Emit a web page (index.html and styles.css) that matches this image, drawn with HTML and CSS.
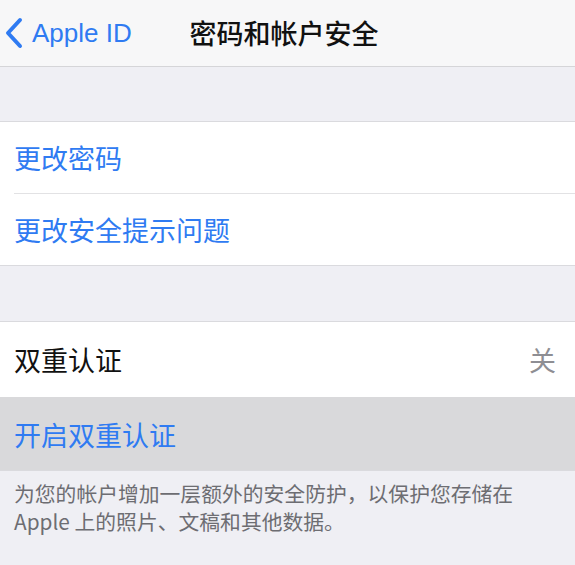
FILE: index.html
```html
<!DOCTYPE html>
<html lang="zh-CN">
<head>
<meta charset="utf-8">
<title>密码和帐户安全</title>
<link rel="stylesheet" href="styles.css">
</head>
<body>
<header class="nav">
  <a class="back" href="#">
    <svg class="chev" width="20" height="32" viewBox="0 0 20 32" aria-hidden="true">
      <path d="M16 3 L4 16 L16 29" fill="none" stroke="currentColor" stroke-width="4" stroke-linecap="round" stroke-linejoin="round"/>
    </svg>
    <span class="back-label">Apple ID</span>
  </a>
  <h1 class="title">密码和帐户安全</h1>
  <span></span>
</header>

<div class="spacer"></div>

<section class="group">
  <div class="row link">更改密码</div>
  <div class="row link">更改安全提示问题</div>
</section>

<div class="spacer spacer-b"></div>

<section class="group">
  <div class="row tall"><span>双重认证</span><span class="value">关</span></div>
  <div class="row link pressed">开启双重认证</div>
</section>

<p class="footer">为您的帐户增加一层额外的安全防护，以保护您存储在<br>Apple 上的照片、文稿和其他数据。</p>
</body>
</html>
```

FILE: styles.css
```css
html, body {
  margin: 0;
  padding: 0;
}

body {
  background: #efeff4;
  font-family: "Noto Sans CJK SC", "Noto Sans", sans-serif;
  color: #111;
}

.nav {
  height: 66px;
  background: #f7f7f8;
  border-bottom: 1px solid #d5d5d8;
  display: grid;
  grid-template-columns: 1fr auto 1fr;
  align-items: center;
}

.back {
  display: flex;
  align-items: center;
  gap: 8px;
  padding-left: 4px;
  color: #2f7bf2;
  text-decoration: none;
}

.chev {
  display: block;
}

.back-label {
  font-family: "Liberation Sans", Arial, sans-serif;
  font-size: 26px;
  line-height: 30px;
  margin-top: -1px;
}

.title {
  margin: 0;
  font-size: 27px;
  font-weight: 500;
  line-height: 32px;
  color: #111;
  padding-right: 7px;
}

.spacer {
  height: 54px;
}

.spacer-b {
  height: 55px;
}

.group {
  background: #fff;
  border-top: 1px solid #dadade;
  border-bottom: 1px solid #dadade;
}

.row {
  height: 71px;
  display: flex;
  align-items: center;
  justify-content: space-between;
  padding: 0 19px 0 14px;
  font-size: 27px;
}

.row + .row {
  border-top: 1px solid #e2e2e4;
  margin-left: 14px;
  padding-left: 0;
}

.link {
  color: #2f7bf2;
}

.tall {
  height: 75px;
}

.value {
  color: #8e8e93;
}

.pressed {
  height: 72px;
  background: #d9d9db;
}

.group .pressed {
  margin-left: 0;
  padding-left: 14px;
  border-top: 1px solid #d9d9db;
}

.footer {
  margin: 0;
  padding: 8px 14px 0;
  font-size: 20.8px;
  line-height: 28px;
  color: #6d6d72;
}
```
